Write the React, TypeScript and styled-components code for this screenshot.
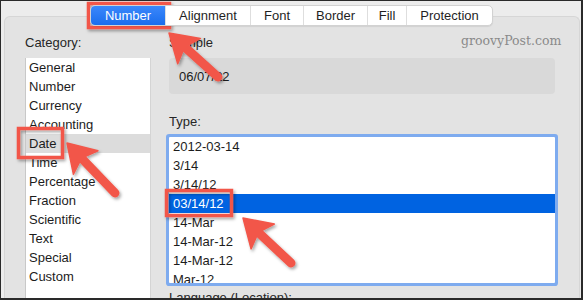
import React from 'react';
import styled, { createGlobalStyle } from 'styled-components';

const tabs = [
  { label: 'Number', width: 74 },
  { label: 'Alignment', width: 84 },
  { label: 'Font', width: 52 },
  { label: 'Border', width: 63 },
  { label: 'Fill', width: 38 },
  { label: 'Protection', width: 85 },
];

const categories = [
  'General',
  'Number',
  'Currency',
  'Accounting',
  'Date',
  'Time',
  'Percentage',
  'Fraction',
  'Scientific',
  'Text',
  'Special',
  'Custom',
];

const types = [
  '2012-03-14',
  '3/14',
  '3/14/12',
  '03/14/12',
  '14-Mar',
  '14-Mar-12',
  '14-Mar-12',
  'Mar-12',
];

const boxes = [
  { x: 88.5, y: 3.5, w: 81, h: 24 },
  { x: 18.5, y: 128.5, w: 44, h: 29 },
  { x: 166.5, y: 190.5, w: 65, h: 25 },
];

const arrows = [
  { tip: [169, 33], tail: [218, 77] },
  { tip: [67, 143], tail: [115, 193] },
  { tip: [243, 218], tail: [291, 263] },
];

const HEAD_LEN = 27;
const HEAD_W = 17;
const NOTCH = 21;

const headPoints = (tip: number[], tail: number[]) => {
  const dx = tail[0] - tip[0];
  const dy = tail[1] - tip[1];
  const len = Math.sqrt(dx * dx + dy * dy);
  const ux = dx / len;
  const uy = dy / len;
  const px = -uy;
  const py = ux;
  const pts = [
    [tip[0], tip[1]],
    [tip[0] + ux * HEAD_LEN + px * HEAD_W, tip[1] + uy * HEAD_LEN + py * HEAD_W],
    [tip[0] + ux * NOTCH, tip[1] + uy * NOTCH],
    [tip[0] + ux * HEAD_LEN - px * HEAD_W, tip[1] + uy * HEAD_LEN - py * HEAD_W],
  ];
  return pts.map((p) => p.join(',')).join(' ');
};

const App = () => {
  return (
    <>
      <GlobalStyle />
      <Page>
        <Window>
          <TabBar>
            {tabs.map((t) => (
              <Tab key={t.label} $width={t.width} $active={t.label === 'Number'}>
                {t.label}
              </Tab>
            ))}
          </TabBar>
          <Panel>
            <Column>
              <Label>Category:</Label>
              <CategoryList>
                {categories.map((c) => (
                  <CategoryRow key={c} $selected={c === 'Date'}>
                    {c}
                  </CategoryRow>
                ))}
              </CategoryList>
            </Column>
            <Column>
              <Label>Sample</Label>
              <SampleBox>06/07/22</SampleBox>
              <Label $gap={20}>Type:</Label>
              <TypeList>
                {types.map((t, i) => (
                  <TypeRow key={i} $selected={i === 3}>
                    {t}
                  </TypeRow>
                ))}
              </TypeList>
              <Label>Language (Location):</Label>
            </Column>
          </Panel>
          <Watermark>groovyPost.com</Watermark>
        </Window>
        <Annotations width="583" height="300" viewBox="0 0 583 300">
          <defs>
            <filter id="shadow" x="-20%" y="-20%" width="140%" height="140%">
              <feDropShadow dx="1.5" dy="2" stdDeviation="1.6" floodColor="#000" floodOpacity="0.35" />
            </filter>
          </defs>
          <g filter="url(#shadow)">
            {boxes.map((b, i) => (
              <rect
                key={i}
                x={b.x}
                y={b.y}
                width={b.w}
                height={b.h}
                fill="none"
                stroke="#f2574a"
                strokeWidth="3.5"
              />
            ))}
            {arrows.map((a, i) => (
              <g key={i} fill="#f2574a" stroke="#f2574a">
                <line
                  x1={a.tail[0]}
                  y1={a.tail[1]}
                  x2={a.tip[0] + (a.tail[0] - a.tip[0]) * 0.3}
                  y2={a.tip[1] + (a.tail[1] - a.tip[1]) * 0.3}
                  strokeWidth="9"
                  strokeLinecap="round"
                />
                <polygon points={headPoints(a.tip, a.tail)} strokeWidth="1.5" strokeLinejoin="round" />
              </g>
            ))}
          </g>
        </Annotations>
      </Page>
    </>
  );
};

export default App;

const GlobalStyle = createGlobalStyle`
  body {
    margin: 0;
    background: #262626;
    font-family: 'Liberation Sans', Arial, sans-serif;
  }
`;

const Page = styled.div`
  position: relative;
  width: 583px;
  height: 300px;
  box-sizing: border-box;
  padding: 1px 2px 2px 1px;
  background: #2a2a2a;
  overflow: hidden;
`;

const Window = styled.div`
  position: relative;
  height: 100%;
  background: #ececec;
  overflow: hidden;
  display: flex;
  flex-direction: column;
`;

const TabBar = styled.div`
  position: relative;
  z-index: 1;
  flex-shrink: 0;
  align-self: center;
  display: flex;
  margin-top: 4px;
  margin-left: 1px;
  height: 19px;
  background: #ffffff;
  border: 1px solid #d2d2d2;
  border-radius: 5px;
  box-shadow: 0 1px 1px rgba(0, 0, 0, 0.08);
  overflow: hidden;
`;

const Tab = styled.div<{ $width: number; $active?: boolean }>`
  width: ${(p) => p.$width}px;
  display: flex;
  align-items: center;
  justify-content: center;
  font-size: 13px;
  color: ${(p) => (p.$active ? '#ffffff' : '#1f1f1f')};
  background: ${(p) => (p.$active ? 'linear-gradient(#3b88fb, #1a6ded)' : 'transparent')};
  border-left: 1px solid #dedede;
  &:first-child {
    border-left: none;
  }
`;

const Panel = styled.div`
  flex: 1 0 auto;
  margin: -10px 1px 0 3px;
  padding: 18px 24px 0 20px;
  background: #e3e3e3;
  border: 1px solid #d6d6d6;
  border-bottom: none;
  border-radius: 6px 6px 0 0;
  display: grid;
  grid-template-columns: 126px 1fr;
  column-gap: 18px;
`;

const Column = styled.div`
  display: flex;
  flex-direction: column;
`;

const Label = styled.div<{ $gap?: number }>`
  flex-shrink: 0;
  margin-top: ${(p) => p.$gap ?? 0}px;
  margin-bottom: 7px;
  font-size: 13px;
  line-height: 16px;
  color: #262626;
`;

const CategoryList = styled.div`
  flex: 1 0 auto;
  background: #ffffff;
  border-left: 1px solid #c8c8c8;
  border-right: 1px solid #d4d4d4;
`;

const CategoryRow = styled.div<{ $selected?: boolean }>`
  height: 19px;
  line-height: 19px;
  padding-left: 3px;
  font-size: 13px;
  color: #1c1c1c;
  background: ${(p) => (p.$selected ? '#dcdcdc' : 'transparent')};
`;

const SampleBox = styled.div`
  flex-shrink: 0;
  height: 36px;
  display: flex;
  align-items: center;
  padding-left: 10px;
  background: #d9d9d9;
  border-radius: 4px;
  font-size: 13px;
  color: #1c1c1c;
`;

const TypeList = styled.div`
  flex-shrink: 0;
  height: 146px;
  margin-bottom: 7px;
  background: #ffffff;
  box-shadow: 0 0 0 3px #7eabef;
  border-radius: 1px;
  overflow: hidden;
`;

const TypeRow = styled.div<{ $selected?: boolean }>`
  height: 19px;
  line-height: 19px;
  padding-left: 4px;
  font-size: 13px;
  color: ${(p) => (p.$selected ? '#ffffff' : '#1c1c1c')};
  background: ${(p) => (p.$selected ? '#0063e1' : 'transparent')};
`;

const Watermark = styled.div`
  position: absolute;
  top: 32px;
  left: 460px;
  font-family: 'DejaVu Serif', 'Liberation Serif', serif;
  font-size: 12.5px;
  color: #8a8a8a;
`;

const Annotations = styled.svg`
  position: absolute;
  top: 0;
  left: 0;
  pointer-events: none;
`;
